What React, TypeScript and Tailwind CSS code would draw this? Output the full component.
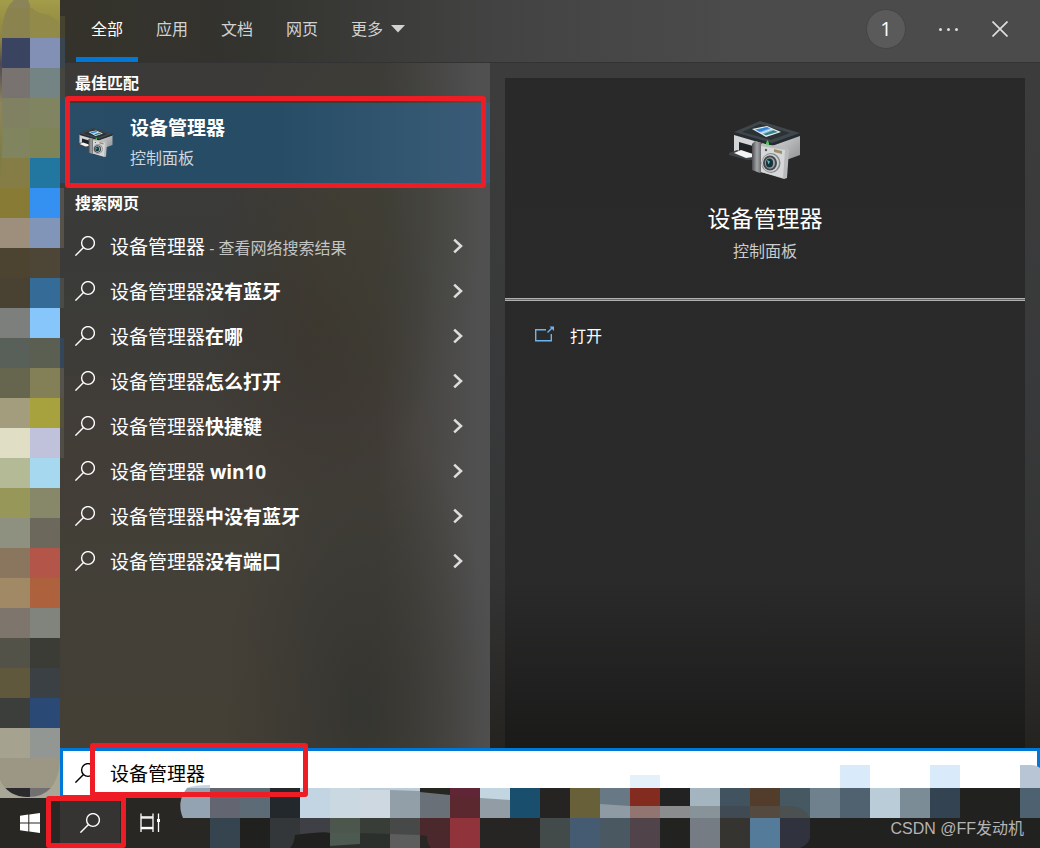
import { useState } from 'react'

const TABS = ['全部', '应用', '文档', '网页']

const QUERY = '设备管理器'

type Suggestion = { rest?: string; hint?: string }

const SUGGESTIONS: Suggestion[] = [
  { hint: '查看网络搜索结果' },
  { rest: '没有蓝牙' },
  { rest: '在哪' },
  { rest: '怎么打开' },
  { rest: '快捷键' },
  { rest: ' win10' },
  { rest: '中没有蓝牙' },
  { rest: '没有端口' },
]

// two columns of 30px tiles, top to bottom
const DESKTOP_TILES: [string, string][] = [
  ['#8a8458', '#9b9548'],
  ['#8a834f', '#918a48'],
  ['#3a4360', '#8290b5'],
  ['#787370', '#748384'],
  ['#808062', '#808461'],
  ['#80845f', '#7f8458'],
  ['#857d45', '#2277a0'],
  ['#887b36', '#3491f2'],
  ['#9e8f7c', '#8095b7'],
  ['#4c4430', '#4d4535'],
  ['#494233', '#356b97'],
  ['#7d7f7c', '#87c6fb'],
  ['#596059', '#5a5f52'],
  ['#66664f', '#837f56'],
  ['#a39c7d', '#a8a23e'],
  ['#e0dfc5', '#bfc2da'],
  ['#b5ba96', '#a6d8f0'],
  ['#98975a', '#87886a'],
  ['#8f9180', '#6c685b'],
  ['#8a765f', '#b35548'],
  ['#a28966', '#ae613d'],
  ['#7e766d', '#80847c'],
  ['#525248', '#3b3c36'],
  ['#5f583d', '#3a4043'],
  ['#3c3e3b', '#2a4a75'],
  ['#a5a28f', '#939794'],
  ['#9c9784', '#9c9784'],
  ['#2a2a2c', '#716f6f'],
]

// both rows start at x = 210
const TASKBAR_UPPER = [
  '#636671', '#5d6b77', '#23282c', '#c3d5e3', '#cad8e1', '#cdd8e0', '#929ea8',
  '#697077', '#5b2830', '#c3d5e1', '#194e6c', '#252422', '#686039', '#687884',
  '#832b1f', '#222222', '#a4b5c0', '#40535f', '#523d2d', '#465861', '#6e818c',
  '#50626f', '#b9ccd8', '#7b8c96', '#334352', '#21211f', '#21211f', '#4d6170',
]

const TASKBAR_LOWER = [
  '#35444f', '#20201e', '#34373a', '#3e4045', '#4c564c', '#393d38', '#464948',
  '#4a282c', '#91333b', '#272523', '#272523', '#424a4a', '#455b71', '#4a5861',
  '#50434a', '#222220', '#757c83', '#353430', '#557b9b', '#212120', '#212120',
  '#212120', '#212120', '#212120', '#212120', '#212120', '#212120', '#212120',
]

function SearchIcon() {
  return (
    <svg
      viewBox="0 0 20 20"
      className="h-5 w-5 shrink-0"
      fill="none"
      stroke="currentColor"
      strokeWidth="1.4"
      aria-hidden
    >
      <circle cx="13" cy="7" r="6.4" />
      <path d="M8.500 11.500 0.400 19.600" />
    </svg>
  )
}

function ChevronIcon() {
  return (
    <svg
      viewBox="0 0 10 16"
      className="h-4 w-[10px] shrink-0 text-[#dddddd]"
      fill="none"
      stroke="currentColor"
      strokeWidth="2.6"
      aria-hidden
    >
      <path d="M1.2 1.6 8 8 1.2 14.4" />
    </svg>
  )
}

function DeviceIcon({ className, id }: { className: string; id: string }) {
  return (
    <svg viewBox="0 0 72 60" className={className} aria-hidden>
      <defs>
        <linearGradient id={`${id}-photo`} x1="0" y1="0" x2="1" y2="1">
          <stop offset="0" stopColor="#3f94e0" />
          <stop offset="0.35" stopColor="#2f7fd0" />
          <stop offset="0.5" stopColor="#d4ebf8" />
          <stop offset="0.65" stopColor="#2f7a86" />
          <stop offset="1" stopColor="#86b58e" />
        </linearGradient>
        <linearGradient id={`${id}-grip`} x1="0" y1="0" x2="1" y2="0">
          <stop offset="0" stopColor="#4b4d50" />
          <stop offset="0.5" stopColor="#a4a6a8" />
          <stop offset="1" stopColor="#5e6063" />
        </linearGradient>
        <linearGradient id={`${id}-side`} x1="0" y1="0" x2="1" y2="1">
          <stop offset="0" stopColor="#d8d9da" />
          <stop offset="1" stopColor="#8f9193" />
        </linearGradient>
      </defs>
      <path d="M5 12 43 24V42L5 34Z" fill="#d3d4d5" />
      <path d="M43 24 71 14V34L60 38 43 40Z" fill={`url(#${id}-side)`} />
      <path d="M10 21 24 25V36L10 32Z" fill="#1f2326" />
      <path d="M5 11 31 0 71 12V15L43 25 5 14Z" fill="#252b2f" />
      <path d="M5 11 31 0 71 12 43 22Z" fill="#3f474c" />
      <path d="M13 11 31 3 61 12 42 19Z" fill="#2b3236" />
      <path d="M23 8 38 5 52 11 37 16Z" fill="#e8eef2" />
      <path d="M26 8.500 38 6 49 11 37 14.500Z" fill={`url(#${id}-photo)`} />
      <path d="M37 22 38.500 19 40 22V25H37Z" fill="#3fd14b" />
      <path d="M0 32 8 29 24 34V39L18 39 0 34Z" fill="#3c4449" />
      <path d="M5 32 12 29 24 33V36L17 37Z" fill="#f5f5f5" />
      <path d="M23 23 26 20 33 22V51L31 52 23 49Z" fill={`url(#${id}-grip)`} />
      <path d="M32 23 57 26 60 29 58 57 55 58 32 51Z" fill="#b9babb" />
      <path d="M32 25 56 29 54 57 32 51Z" fill="#d6d7d8" />
      <path d="M45 28 53 30V33L45 31Z" fill="#9b916b" />
      <circle cx="37" cy="29" r="1.2" fill="#555555" />
      <ellipse cx="42" cy="42" rx="9.500" ry="10" fill="#85888a" />
      <ellipse cx="41.500" cy="42" rx="8.500" ry="9" fill="#cfd0d1" />
      <ellipse cx="41" cy="42" rx="7" ry="7.500" fill="#44494c" />
      <ellipse cx="41" cy="42" rx="5" ry="5.800" fill="#9aa3a7" />
      <ellipse cx="40.500" cy="42" rx="3.600" ry="4.500" fill="#173239" />
      <path d="M38 39 41 40.500 39.500 43.500Z" fill="#4fc3d0" />
    </svg>
  )
}

function DesktopStrip() {
  return (
    <div className="w-[60px] shrink-0 bg-[#8f8f58]" aria-hidden>
      <svg width="66" height="798" className="relative block overflow-visible">
        <defs>
          <linearGradient id="wallpaper" x1="0" y1="0" x2="0" y2="1">
            <stop offset="0" stopColor="#a39c49" />
            <stop offset="0.05" stopColor="#8c8240" />
            <stop offset="0.08" stopColor="#4d4752" />
            <stop offset="0.13" stopColor="#8f8558" />
            <stop offset="0.2" stopColor="#7d7d42" />
            <stop offset="1" stopColor="#a9a797" />
          </linearGradient>
          <clipPath id="strip-shape">
            <path d="M14 0H28Q32 13 45 14Q60 18 64 36V170Q60 180 60 188V760Q58 797 28 797Q8 797 0 780V180Q3 160 2 110V30Q4 8 14 0Z" />
          </clipPath>
        </defs>
        <rect width="60" height="798" fill="url(#wallpaper)" />
        <g clipPath="url(#strip-shape)">
          {DESKTOP_TILES.map(([left, right], row) => (
            <g key={row}>
              <rect x="0" y={row * 30 - 22} width="30" height="30" fill={left} />
              <rect x="30" y={row * 30 - 22} width="30" height="30" fill={right} />
            </g>
          ))}
        </g>
        <rect x="60" y="16" width="5" height="22" fill="#45422f" />
        <rect x="60" y="38" width="5" height="30" fill="#394650" />
        <rect x="60" y="68" width="5" height="30" fill="#44463f" />
        <rect x="60" y="98" width="5" height="30" fill="#304b5c" />
        <rect x="60" y="128" width="4" height="30" fill="#62727e" />
        <rect x="60" y="188" width="4" height="30" fill="#515150" />
        <rect x="60" y="218" width="4" height="30" fill="#56524a" />
        <rect x="60" y="278" width="4" height="30" fill="#494b49" />
        <rect x="60" y="338" width="4" height="30" fill="#34475a" />
        <rect x="60" y="368" width="4" height="30" fill="#54524a" />
        <rect x="60" y="398" width="4" height="30" fill="#55523a" />
        <rect x="60" y="428" width="4" height="30" fill="#504d47" />
      </svg>
    </div>
  )
}

function TaskbarMosaic() {
  return (
    <svg
      className="pointer-events-none absolute bottom-0 left-0 z-10 h-[90px] w-full"
      aria-hidden
    >
      <rect x="630" y="17" width="30" height="13" fill="#e4f1fb" />
      <rect x="840" y="7" width="30" height="23" fill="#d9eafa" />
      <rect x="930" y="7" width="30" height="23" fill="#d9eafa" />
      <path d="M1020 7H1030Q1037 7 1040 10V30H1020Z" fill="#b7c5d4" />
      <path d="M186 30Q194 27 210 27V30Z" fill="#c6d7e4" />
      <path d="M187 30H210V60H183Q176 44 187 30Z" fill="#93a3b1" />
      {TASKBAR_UPPER.map((fill, i) => (
        <rect key={i} x={210 + i * 30} y="30" width="30" height="30" fill={fill} />
      ))}
      {TASKBAR_LOWER.map((fill, i) => (
        <rect key={i} x={210 + i * 30} y="60" width="30" height="30" fill={fill} />
      ))}
      <path d="M360 30H420V33L390 32H360Z" fill="#bccdda" />
      <path d="M420 30H450V37L420 34Z" fill="#252620" />
      <path d="M450 30H480V40L450 37Z" fill="#602638" />
      <path d="M480 40 510 42V60H480Z" fill="#919ca5" />
      <path d="M600 46 630 48V60H600Z" fill="#8f9ba4" />
      <rect x="630" y="48" width="30" height="12" fill="#927471" />
      <rect x="660" y="48" width="30" height="12" fill="#8a8c8e" />
      <rect x="690" y="48" width="30" height="12" fill="#889299" />
      <rect x="720" y="48" width="30" height="12" fill="#3f4a54" />
      <rect x="750" y="48" width="30" height="12" fill="#544a40" />
      <path d="M780 48H793Q805 50 810 60H780Z" fill="#4b5050" />
      <path d="M780 60H810V80Q808 87 800 90H780Z" fill="#30333d" />
      <path d="M295 77Q325 73 330 75V90H290Q294 86 295 77Z" fill="#20211f" />
      <path d="M330 75H360V86L330 88Z" fill="#4d5a52" />
      <path d="M360 75 390 76V90H330V88L360 86Z" fill="#2b302d" />
      <path d="M390 76 420 77V90H390Z" fill="#5c5d5c" />
      <path d="M420 77 427 78Q427 86 431 90H420Z" fill="#292725" />
    </svg>
  )
}

export default function App() {
  const [activeTab, setActiveTab] = useState('全部')
  const [query, setQuery] = useState(QUERY)

  return (
    <div className="relative flex min-h-screen flex-col bg-[#252422] font-['Open_Sans','Noto_Sans_CJK_SC',sans-serif] text-white">
      <div className="flex flex-1">
        <DesktopStrip />

        <main className="flex min-w-0 flex-1 flex-col">
          <header className="flex h-[63px] shrink-0 items-stretch justify-between border-b border-[#333333] bg-[linear-gradient(90deg,#34322a_0%,#33332f_20%,#434343_45%,#4b4b4b_70%,#4b4b4b_100%)] pl-4">
            <nav className="flex gap-[3px]">
              {TABS.map((tab) => (
                <button
                  key={tab}
                  type="button"
                  onClick={() => setActiveTab(tab)}
                  className={`border-b-[5px] px-[15px] text-base ${
                    tab === activeTab
                      ? 'border-[#0078d7] text-white'
                      : 'border-transparent text-[#d2d2d2]'
                  }`}
                >
                  {tab}
                </button>
              ))}
              <button
                type="button"
                className="flex items-center gap-2 border-b-[5px] border-transparent px-[15px] text-base text-[#d2d2d2]"
              >
                更多
                <svg viewBox="0 0 14 8" className="h-2 w-[14px]" aria-hidden>
                  <path d="M0 0H14L7 7.500Z" fill="currentColor" />
                </svg>
              </button>
            </nav>
            <div className="flex items-center pr-[14px] pb-1">
              <button
                type="button"
                className="mr-4 h-10 w-10 rounded-full border border-[#454545] bg-[#5a5a5a] text-xl"
              >
                1
              </button>
              <button
                type="button"
                aria-label="选项"
                className="flex h-10 w-[52px] items-center justify-center gap-[5px]"
              >
                <span className="h-[3px] w-[3px] rounded-full bg-[#dddddd]" />
                <span className="h-[3px] w-[3px] rounded-full bg-[#dddddd]" />
                <span className="h-[3px] w-[3px] rounded-full bg-[#dddddd]" />
              </button>
              <button
                type="button"
                aria-label="关闭"
                className="flex h-10 w-[52px] items-center justify-center"
              >
                <svg viewBox="0 0 16 16" className="h-4 w-4" aria-hidden>
                  <path
                    d="M0.500 0.500 15.500 15.500M15.500 0.500 0.500 15.500"
                    stroke="#dddddd"
                    strokeWidth="1.7"
                  />
                </svg>
              </button>
            </div>
          </header>

          <div className="flex flex-1">
            <section className="w-[430px] shrink-0 bg-[radial-gradient(ellipse_at_70%_22%,#45433180_0%,transparent_30%),radial-gradient(ellipse_at_60%_38%,#3a352f_0%,transparent_32%),radial-gradient(ellipse_at_70%_94%,#353531_0%,transparent_32%),linear-gradient(90deg,transparent_74%,#505050_97%),linear-gradient(180deg,#3b3a38_0%,#3a3b39_30%,#423d37_55%,#434038_75%,#453f35_100%)]">
              <h2 className="flex h-10 items-center pl-[15px] text-base font-bold">
                最佳匹配
              </h2>
              <div className="relative">
                <button
                  type="button"
                  className="flex h-20 w-full items-center gap-[17px] bg-[linear-gradient(90deg,#2a4c66_0%,#264c66_50%,#355872_85%,#3a5b79_100%)] pl-[17px] text-left"
                >
                  <DeviceIcon id="match" className="h-[30px] w-9 shrink-0" />
                  <span className="flex flex-col">
                    <span className="text-[19px] leading-[30px] font-bold">{QUERY}</span>
                    <span className="text-base leading-[30px] text-[#cfd6dc]">
                      控制面板
                    </span>
                  </span>
                </button>
                <span className="pointer-events-none absolute -top-[7px] right-1 -bottom-[5px] left-[5px] rounded-[3px] border-[5px] border-[#ee1c25]" />
              </div>

              <h2 className="flex h-10 items-center pl-[15px] text-base font-bold">
                搜索网页
              </h2>
              <ul>
                {SUGGESTIONS.map(({ rest, hint }) => (
                  <li key={rest ?? hint}>
                    <button
                      type="button"
                      className="flex h-[45px] w-full items-center pr-[27px] pl-[15px] text-left text-[19px]"
                    >
                      <SearchIcon />
                      <span className="ml-[15px] flex-1 pt-[3px] whitespace-pre">
                        {QUERY}
                        {rest ? <b>{rest}</b> : null}
                        {hint ? (
                          <span className="text-base text-[#c4c4c4]"> - {hint}</span>
                        ) : null}
                      </span>
                      <ChevronIcon />
                    </button>
                  </li>
                ))}
              </ul>
            </section>

            <section className="flex min-w-0 flex-1 flex-col bg-[linear-gradient(180deg,#3c3c3c_0%,#38393a_50%,#343434_75%,#242320_100%)] px-[15px] pt-[15px]">
              <div className="flex flex-1 flex-col bg-[linear-gradient(180deg,#292929_0%,#2a2a2a_75%,#1a1a19_100%)]">
                <div className="flex h-[220px] flex-col items-center pt-[43px]">
                  <DeviceIcon id="detail" className="h-[60px] w-[72px]" />
                  <h1 className="mt-[22px] text-[23px] leading-[30px]">{QUERY}</h1>
                  <p className="mt-[6px] text-base leading-6 text-[#cccccc]">控制面板</p>
                </div>
                <hr className="h-[3px] border-y border-[#b0b0b0] bg-[#6a6a6a]" />
                <button
                  type="button"
                  className="flex h-[70px] items-center gap-[15px] pl-[30px] text-base"
                >
                  <svg
                    viewBox="0 0 20 16"
                    className="mb-1 h-4 w-5"
                    fill="none"
                    stroke="#6cb4ee"
                    strokeWidth="1.4"
                    aria-hidden
                  >
                    <path d="M11 3.700H0.700V14.700H16.300V8" />
                    <path d="M12.500 6.500 17.500 1.500" />
                    <path d="M14.500 0.500H19V5Z" fill="#6cb4ee" stroke="none" />
                  </svg>
                  打开
                </button>
              </div>
            </section>
          </div>

          <div className="relative h-[50px] shrink-0">
            <label className="flex h-full items-center border-[3px] border-[#0078d7] bg-white pl-3 text-black">
              <SearchIcon />
              <input
                type="text"
                aria-label="搜索"
                value={query}
                onChange={(e) => setQuery(e.target.value)}
                className="ml-[15px] h-full min-w-0 flex-1 bg-transparent text-[19px] outline-none"
              />
            </label>
            <span className="pointer-events-none absolute -top-[5px] left-[30px] z-20 h-[54px] w-[218px] rounded-[3px] border-[5px] border-[#ee1c25]" />
          </div>
        </main>
      </div>

      <footer className="flex h-[50px] shrink-0 bg-[#282724]">
        <button
          type="button"
          aria-label="开始"
          className="flex w-[60px] items-center justify-center"
        >
          <svg viewBox="0 0 20 20" className="h-5 w-5" fill="#ffffff" aria-hidden>
            <path d="M0 2.800 8.300 1.600V9.500H0ZM9.300 1.500 20 0V9.500H9.300ZM0 10.500H8.300V18.400L0 17.200ZM9.300 10.500H20V20L9.300 18.500Z" />
          </svg>
        </button>
        <div className="relative flex w-[60px]">
          <button
            type="button"
            aria-label="搜索按钮"
            className="flex w-full items-center justify-center bg-[#353432]"
          >
            <SearchIcon />
          </button>
          <span className="pointer-events-none absolute -top-[2px] -right-[6px] bottom-0 -left-[14px] z-20 rounded-[3px] border-[5px] border-[#ee1c25]" />
        </div>
        <button
          type="button"
          aria-label="任务视图"
          className="flex w-[60px] items-center justify-center"
        >
          <svg
            viewBox="0 0 21 20"
            className="h-5 w-[21px]"
            fill="none"
            stroke="#ffffff"
            strokeWidth="1.3"
            aria-hidden
          >
            <path d="M1 0.500V4H13V0.500M1 19V15.500H13V19" />
            <rect x="1" y="5" width="12" height="9.500" />
            <path d="M18.500 0.500V19" />
            <rect x="17" y="6" width="3" height="3" fill="#ffffff" stroke="none" />
          </svg>
        </button>
      </footer>

      <TaskbarMosaic />
      <p className="absolute right-4 bottom-1 z-20 font-['Liberation_Sans','Noto_Sans_CJK_SC',sans-serif] text-base leading-[30px] text-[#b4b4b4]">
        CSDN @FF发动机
      </p>
    </div>
  )
}
